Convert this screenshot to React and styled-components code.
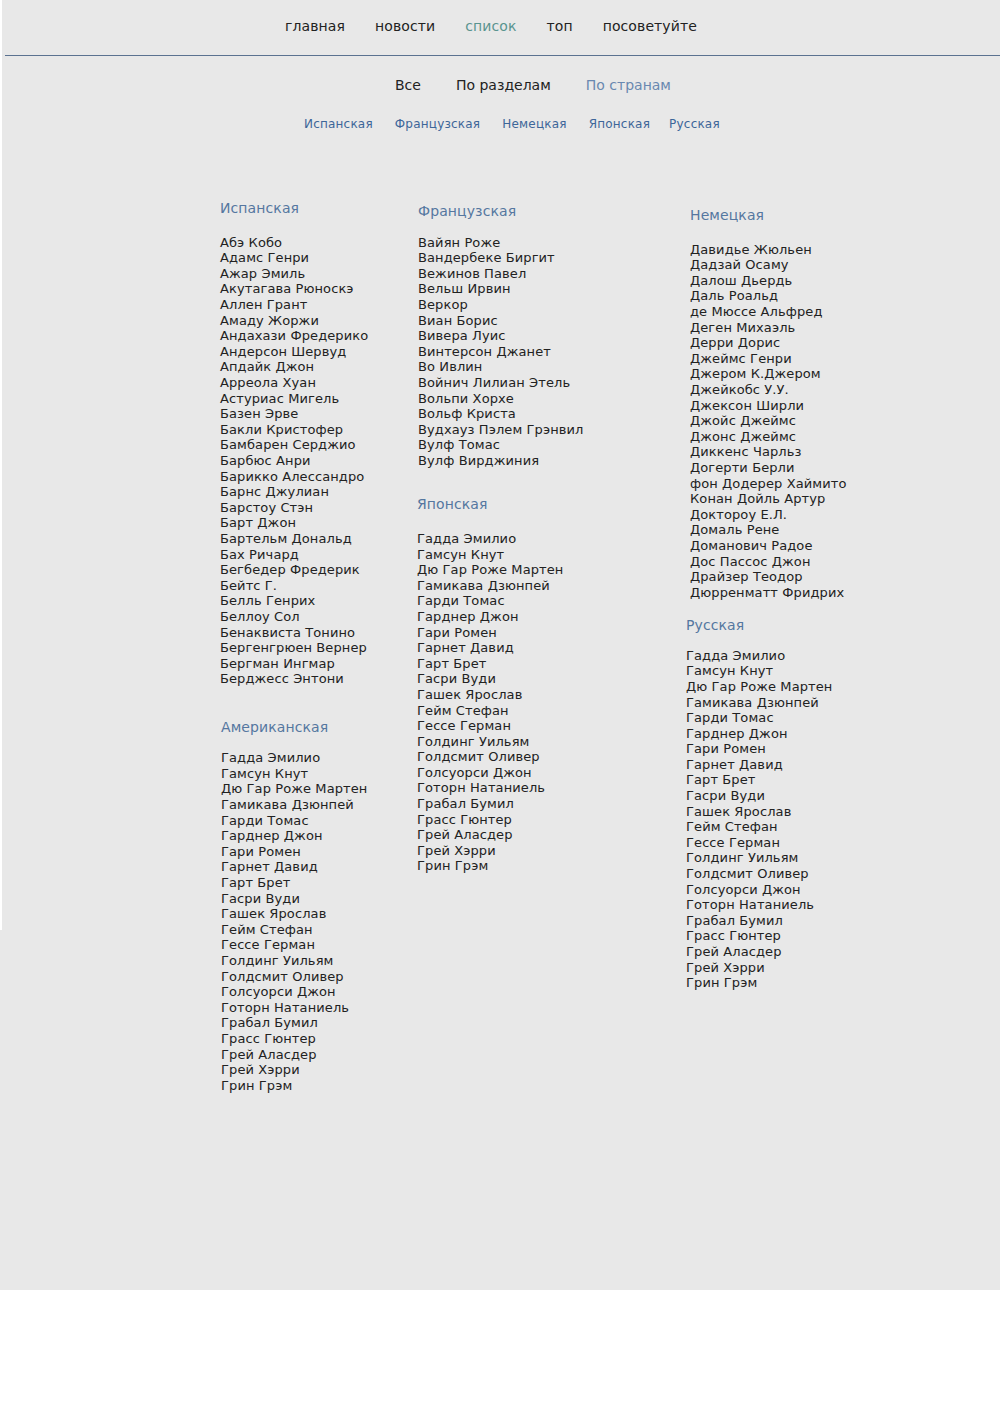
import React from "react";
import styled, { createGlobalStyle } from "styled-components";

const Global = createGlobalStyle`
  html, body { margin: 0; padding: 0; background: #ffffff; }
  body { font-family: "DejaVu Sans", Verdana, sans-serif; }
  ul { margin: 0; padding: 0; list-style: none; }
`;

const Page = styled.div`
  width: 1000px;
  height: 1290px;
  background: #e8e8e8;
`;

const Frame = styled.div`
  height: 930px;
  border-left: 2px solid #ffffff;
`;

const TopNav = styled.nav`
  height: 56px;
  display: flex;
  align-items: center;
  gap: 30px;
  padding: 0 0 3px 280px;
  box-sizing: border-box;
  border-bottom: 1px solid #5b7290;
  margin-left: 3px;
`;

const TopLink = styled.a`
  font-size: 14px;
  color: ${(p) => (p.$active ? "#5a948f" : "#222222")};
  text-decoration: none;
  letter-spacing: 0.1px;
`;

const Tabs = styled.div`
  display: flex;
  gap: 35px;
  padding-left: 393px;
  height: 40px;
  margin-top: 9px;
  align-items: center;
`;

const Tab = styled.a`
  font-size: 14px;
  color: ${(p) => (p.$active ? "#6a88b0" : "#222222")};
  text-decoration: none;
`;

const SubTabs = styled.div`
  display: flex;
  gap: 22px;
  padding-left: 302px;
  height: 24px;
  align-items: center;
  margin-top: 7px;
`;

const SubTab = styled.a`
  font-size: 12px;
  letter-spacing: 0.2px;
  color: #3d6699;
  text-decoration: none;
  margin-left: ${(p) => p.$pull || 0}px;
`;

const Columns = styled.div`
  display: flex;
  padding-left: 218px;
  margin-top: 55px;
`;

const Column = styled.div`
  width: ${(p) => p.$w}px;
  padding-top: ${(p) => p.$top}px;
  flex: none;
`;

const Section = styled.section`
  margin-top: ${(p) => p.$before || 0}px;
  margin-left: ${(p) => p.$shift || 0}px;
`;

const Heading = styled.h3`
  margin: 0 0 ${(p) => p.$gap - 17.8}px 0;
  font-size: 14px;
  font-weight: normal;
  line-height: 20px;
  letter-spacing: 0.1px;
  color: #5577a0;
`;

const Name = styled.li`
  font-size: 13px;
  line-height: 15.6px;
  letter-spacing: 0.1px;
  color: #222222;
  white-space: nowrap;
`;

const spanish = [
  "Абэ Кобо", "Адамс Генри", "Ажар Эмиль", "Акутагава Рюноскэ", "Аллен Грант",
  "Амаду Жоржи", "Андахази Фредерико", "Андерсон Шервуд", "Апдайк Джон",
  "Арреола Хуан", "Астуриас Мигель", "Базен Эрве", "Бакли Кристофер",
  "Бамбарен Серджио", "Барбюс Анри", "Барикко Алессандро", "Барнс Джулиан",
  "Барстоу Стэн", "Барт Джон", "Бартельм Дональд", "Бах Ричард",
  "Бегбедер Фредерик", "Бейтс Г.", "Белль Генрих", "Беллоу Сол",
  "Бенаквиста Тонино", "Бергенгрюен Вернер", "Бергман Ингмар", "Берджесс Энтони",
];

const gList = [
  "Гадда Эмилио", "Гамсун Кнут", "Дю Гар Роже Мартен", "Гамикава Дзюнпей",
  "Гарди Томас", "Гарднер Джон", "Гари Ромен", "Гарнет Давид", "Гарт Брет",
  "Гасри Вуди", "Гашек Ярослав", "Гейм Стефан", "Гессе Герман",
  "Голдинг Уильям", "Голдсмит Оливер", "Голсуорси Джон", "Готорн Натаниель",
  "Грабал Бумил", "Грасс Гюнтер", "Грей Аласдер", "Грей Хэрри", "Грин Грэм",
];

const french = [
  "Вайян Роже", "Вандербеке Биргит", "Вежинов Павел", "Вельш Ирвин", "Веркор",
  "Виан Борис", "Вивера Луис", "Винтерсон Джанет", "Во Ивлин",
  "Войнич Лилиан Этель", "Вольпи Хорхе", "Вольф Криста",
  "Вудхауз Пэлем Грэнвил", "Вулф Томас", "Вулф Вирджиния",
];

const german = [
  "Давидье Жюльен", "Дадзай Осаму", "Далош Дьердь", "Даль Роальд",
  "де Мюссе Альфред", "Деген Михаэль", "Дерри Дорис", "Джеймс Генри",
  "Джером К.Джером", "Джейкобс У.У.", "Джексон Ширли", "Джойс Джеймс",
  "Джонс Джеймс", "Диккенс Чарльз", "Догерти Берли", "фон Додерер Хаймито",
  "Конан Дойль Артур", "Доктороу Е.Л.", "Домаль Рене", "Доманович Радое",
  "Дос Пассос Джон", "Драйзер Теодор", "Дюрренматт Фридрих",
];

function Group({ title, names, gap, before, shift }) {
  return (
    <Section $before={before} $shift={shift}>
      <Heading $gap={gap}>{title}</Heading>
      <ul>
        {names.map((n, i) => (
          <Name key={i}>{n}</Name>
        ))}
      </ul>
    </Section>
  );
}

export default function App() {
  return (
    <>
      <Global />
      <Page>
        <Frame>
          <TopNav>
            <TopLink href="#">главная</TopLink>
            <TopLink href="#">новости</TopLink>
            <TopLink href="#" $active>список</TopLink>
            <TopLink href="#">топ</TopLink>
            <TopLink href="#">посоветуйте</TopLink>
          </TopNav>
          <Tabs>
            <Tab href="#">Все</Tab>
            <Tab href="#">По разделам</Tab>
            <Tab href="#" $active>По странам</Tab>
          </Tabs>
          <SubTabs>
            <SubTab href="#">Испанская</SubTab>
            <SubTab href="#">Французская</SubTab>
            <SubTab href="#">Немецкая</SubTab>
            <SubTab href="#">Японская</SubTab>
            <SubTab href="#" $pull={-3}>Русская</SubTab>
          </SubTabs>
          <Columns>
            <Column $w={198} $top={6.5}>
              <Group title="Испанская" names={spanish} gap={35} />
              <Group title="Американская" names={gList} gap={31} before={30.2} shift={1} />
            </Column>
            <Column $w={272} $top={9.5}>
              <Group title="Французская" names={french} gap={32} />
              <Group title="Японская" names={gList} gap={35} before={25.2} shift={-1} />
            </Column>
            <Column $w={200} $top={13.5}>
              <Group title="Немецкая" names={german} gap={35} />
              <Group title="Русская" names={gList} gap={31} before={14.2} shift={-4} />
            </Column>
          </Columns>
        </Frame>
      </Page>
    </>
  );
}
